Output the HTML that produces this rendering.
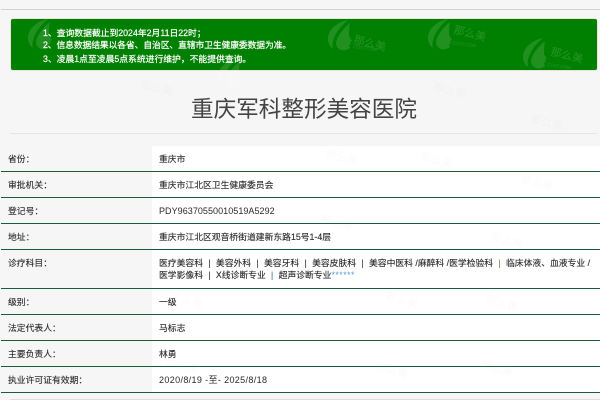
<!DOCTYPE html>
<html lang="zh">
<head>
<meta charset="utf-8">
<style>
html,body{margin:0;padding:0}
body{width:600px;height:400px;overflow:hidden;background:#f6f6f6;position:relative;font-family:"Liberation Sans","Noto Sans CJK SC",sans-serif;color:#333}
.a{position:absolute;white-space:nowrap}
#top{left:1px;top:9px;width:599px;height:1px;background:#d2d2d2}
#alert{left:11px;top:19px;width:586px;height:51px;background:#008000;border-radius:2px;box-shadow:0 0 0 .5px #e8c8c8}
.g{left:43px;color:#fff;font-size:8.8px;line-height:12px;-webkit-text-stroke:.2px #fff}
#title{left:4px;width:600px;top:94px;text-align:center;font-size:22.6px;line-height:32px;color:#444}
#hr{left:10px;top:133px;width:587px;height:1px;background:#e6e6e6}
#white{left:152px;top:146px;width:448px;height:246px;background:#fff}
.l{left:1px;width:599px;height:1px;background:#1a5c3a}
.k,.v{font-size:8.8px;line-height:12px;color:#2a2a2a;-webkit-text-stroke:.12px #2a2a2a}
.k{left:8px}
.v{left:159px}
.n{font-size:9px;letter-spacing:.05px;-webkit-text-stroke:0}
.d{font-size:9px;letter-spacing:.36px;-webkit-text-stroke:0}
.s{color:#444;margin:0 5.3px}
.b{color:#5b9bd5}
.o{color:#d0a050}
.t{letter-spacing:.5px;-webkit-text-stroke:0}
svg{position:absolute;left:0;top:0}
</style>
</head>
<body>
<div class="a" id="top"></div>
<div class="a" id="alert"></div>
<div class="a" id="white"></div>
<svg width="600" height="400" viewBox="0 0 600 400">
  <defs>
    <g id="leaf">
      <path d="M20 0C10 2 0 9 0 19c0 4 2 8 5 10C3 20 9 9 20 0z"/>
      <path d="M22 3C15 9 9 16 8 23c0 3 2 6 5 7 3 1 6 0 9-2l-1-3 2-1-1-2 2-1-3-5c0-5 0-9 1-13z"/>
    </g>
  </defs>
  <g fill="#ffffff" opacity=".13">
    <use href="#leaf" x="328" y="20"/>
    <use href="#leaf" x="428" y="19"/>
    <use href="#leaf" x="523" y="38"/>
    <use href="#leaf" x="28" y="19"/>
    <use href="#leaf" x="218" y="58"/>
  </g>
  <g fill="#ffffff" opacity=".15" font-family="Liberation Sans,Noto Sans CJK SC,sans-serif">
    <text font-size="11" transform="translate(353 43) rotate(14)">那么美</text>
    <text font-size="11" transform="translate(453 33) rotate(14)">那么美</text>
    <text font-size="11" transform="translate(550 55) rotate(14)">那么美</text>
    <text font-size="4.5" transform="translate(353 48) rotate(8)">COST.COM</text>
    <text font-size="4.5" transform="translate(452 44) rotate(8)">COST.COM</text>
    <text font-size="4.5" transform="translate(547 66) rotate(8)">COST.COM</text>
  </g>
  <g fill="#000000" opacity=".02" font-family="Liberation Sans,Noto Sans CJK SC,sans-serif" font-size="11">
    <text transform="translate(140 88) rotate(14)">那么美</text>
    <text transform="translate(433 90) rotate(14)">那么美</text>
    <text transform="translate(530 122) rotate(14)">那么美</text>
    <text transform="translate(325 157) rotate(14)">那么美</text>
    <text transform="translate(420 160) rotate(14)">那么美</text>
    <text transform="translate(520 182) rotate(14)">那么美</text>
    <text transform="translate(320 222) rotate(14)">那么美</text>
    <text transform="translate(490 240) rotate(14)">那么美</text>
    <text transform="translate(385 300) rotate(14)">那么美</text>
    <text transform="translate(485 303) rotate(14)">那么美</text>
    <text transform="translate(375 370) rotate(14)">那么美</text>
    <text transform="translate(480 368) rotate(14)">那么美</text>
    <text transform="translate(170 300) rotate(14)">那么美</text>
    <text transform="translate(165 365) rotate(14)">那么美</text>
  </g>
</svg>
<div class="a g" style="top:27px">1、查询数据截止到2024年2月11日22时；</div>
<div class="a g" style="top:39px;letter-spacing:-.11px">2、信息数据结果以各省、自治区、直辖市卫生健康委数据为准。</div>
<div class="a g" style="top:53px">3、凌晨1点至凌晨5点系统进行维护，不能提供查询。</div>
<div class="a" id="title">重庆军科整形美容医院</div>
<div class="a" id="hr"></div>
<div class="a l" style="top:171px"></div>
<div class="a l" style="top:197px"></div>
<div class="a l" style="top:223px"></div>
<div class="a l" style="top:249px"></div>
<div class="a l" style="top:288px"></div>
<div class="a l" style="top:314px"></div>
<div class="a l" style="top:340px"></div>
<div class="a l" style="top:366px"></div>
<div class="a l" style="top:392px"></div>
<div class="a" style="left:10px;top:399px;width:590px;height:1px;background:#ddd"></div>
<div class="a k" style="top:153px">省份：</div>
<div class="a v" style="top:153px">重庆市</div>
<div class="a k" style="top:179px">审批机关：</div>
<div class="a v" style="top:179px">重庆市江北区卫生健康委员会</div>
<div class="a k" style="top:205px">登记号：</div>
<div class="a v n" style="top:205px">PDY96370550010519A5292</div>
<div class="a k" style="top:231px">地址：</div>
<div class="a v" style="top:231px">重庆市江北区观音桥街道建新东路15号1-4层</div>
<div class="a k" style="top:257px">诊疗科目：</div>
<div class="a v" style="top:256.500px">医疗美容科<span class="s">|</span>美容外科<span class="s">|</span>美容牙科<span class="s">|</span>美容皮肤科<span class="s">|</span>美容中医科 /麻醉科 /医学检验科<span class="s o">|</span>临床体液、血液专业 /</div>
<div class="a v" style="top:269px">医学影像科<span class="s">|</span>X线诊断专业<span class="s b">|</span>超声诊断专业<span class="b t">******</span></div>
<div class="a k" style="top:296px">级别：</div>
<div class="a v" style="top:296px">一级</div>
<div class="a k" style="top:322px">法定代表人：</div>
<div class="a v" style="top:322px">马标志</div>
<div class="a k" style="top:348px">主要负责人：</div>
<div class="a v" style="top:348px">林勇</div>
<div class="a k" style="top:374px">执业许可证有效期：</div>
<div class="a v d" style="top:374px">2020/8/19 -至- 2025/8/18</div>
</body>
</html>
